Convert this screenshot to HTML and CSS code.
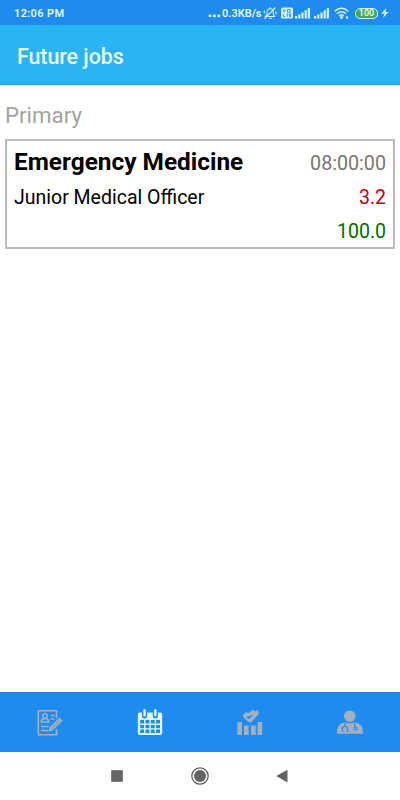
FILE: index.html
```
<!DOCTYPE html>
<html lang="en">
<head>
  <meta charset="UTF-8">
  <meta name="viewport" content="width=device-width, initial-scale=1.0">
  <title>Future jobs</title>
  <link rel="stylesheet" href="styles.css">
</head>
<body>
  <!-- Status bar -->
  <div class="status-bar">
    <span class="clock">12:06 PM</span>
    <div class="status-icons">
      <svg class="dots" width="14" height="14" viewBox="0 0 14 14">
        <circle cx="2" cy="9.8" r="1.5"/><circle cx="6.4" cy="9.8" r="1.5"/><circle cx="10.8" cy="9.8" r="1.5"/>
      </svg>
      <span class="speed">0.3KB/s</span>
      <svg class="bell" width="14" height="14" viewBox="0 0 14 14">
        <path class="line" d="M2.500 10.500h9L10.300 8.500V6c0-2-1.200-3.300-3.100-3.300S4 4 4 6v2.500zM5.800 12.300h3M7.200 1.200v1.500M1.500 12.800 12.500 1.500M1.300 4.500v3M13 5.500v3"/>
      </svg>
      <svg class="volte" width="12" height="14" viewBox="0 0 12 14">
        <rect x="0" y="1.500" width="12" height="11" rx="1.500"/>
        <path class="cut" d="M2 3.500 3.300 6.200 4.600 3.500M6.500 3.500h2.800v2.700H6.500zM2.300 8v2.800h2M5.300 8h2M6.300 8v2.800M10.300 8H8.500v2.800h1.800M8.500 9.400h1.500"/>
      </svg>
      <svg class="signal" width="15" height="14" viewBox="0 0 15 14">
        <path d="M0 10h2.200v2.500H0zM3.200 8.500h2.200v4H3.200zM6.400 6.500h2.200v6H6.400zM9.600 4.300h2.200v8.200H9.600zM12.700 2h2.200v10.500h-2.200z"/>
      </svg>
      <svg class="signal" width="15" height="14" viewBox="0 0 15 14">
        <path d="M0 10h2.200v2.500H0zM3.200 8.500h2.200v4H3.200zM6.400 6.500h2.200v6H6.400zM9.600 4.300h2.200v8.200H9.600zM12.700 2h2.200v10.500h-2.200z"/>
      </svg>
      <svg class="wifi" width="16" height="14" viewBox="0 0 16 14">
        <path class="wave" d="M.8 5.300c4-4 9.400-4 13.400 0M3 7.700c2.700-2.700 6.300-2.700 9 0M5.200 9.900c1.500-1.400 3.100-1.400 4.600 0"/>
        <circle cx="7.500" cy="11.500" r="1.400"/><circle cx="13" cy="11.500" r="1.200"/>
      </svg>
      <span class="battery">100</span>
      <svg class="bolt" width="8" height="14" viewBox="0 0 8 14">
        <path d="M5.200 2 .3 7.700h3L2 12l5.600-5.900h-3z"/>
      </svg>
    </div>
  </div>

  <header class="app-bar">
    <h1>Future jobs</h1>
  </header>

  <main>
    <h2 class="section-title">Primary</h2>
    <div class="job">
      <div class="job-row">
        <span class="department">Emergency Medicine</span>
        <span class="time">08:00:00</span>
      </div>
      <div class="job-row">
        <span class="role">Junior Medical Officer</span>
        <span class="distance">3.2</span>
      </div>
      <div class="job-row">
        <span></span>
        <span class="rate">100.0</span>
      </div>
    </div>
  </main>

  <!-- Bottom tabs -->
  <nav class="tabs">
    <a class="tab">
      <svg width="28" height="28" viewBox="0 0 28 28">
        <path class="outline" d="M20.500 9V1.800H2.300v24h18.200V20"/>
        <circle class="outline" cx="9" cy="7" r="2.200"/>
        <path class="outline" d="M5.300 13c0-4.500 7.400-4.500 7.400 0zM14.500 6.500h4M14.500 10h4M5 17.500h8M5 21.500h7"/>
        <path class="pen" d="m13.500 21.500 1.200-3.300L23.500 9.500l2.200 2.200-9.200 8.800z"/>
      </svg>
    </a>
    <a class="tab active">
      <svg width="28" height="28" viewBox="0 0 28 28">
        <path fill-rule="evenodd" d="M3.500 3.500H6v3.300a2.600 2.600 0 0 0 5.200 0V3.500h5.600v3.300a2.600 2.600 0 0 0 5.200 0V3.500h2.500q1.700 0 1.700 1.700v19q0 1.700-1.700 1.700h-21q-1.700 0-1.700-1.700v-19q0-1.700 1.700-1.700z
          M4.200 11v3.600h3.900V11zM9.500 11v3.600h3.900V11zM14.800 11v3.600h3.900V11zM20.100 11v3.600H24V11z
          M4.200 15.900v3.400h3.900v-3.400zM9.500 15.900v3.400h3.900v-3.400zM14.800 15.900v3.400h3.900v-3.400zM20.100 15.900v3.400H24v-3.400z
          M4.200 20.600V24h3.900v-3.400zM9.500 20.600V24h3.900v-3.400zM14.800 20.600V24h3.900v-3.400zM20.100 20.600V24H24v-3.400z"/>
        <rect x="7.400" y="0" width="2.400" height="7.500" rx="1.200"/>
        <rect x="18.200" y="0" width="2.400" height="7.500" rx="1.200"/>
      </svg>
    </a>
    <a class="tab">
      <svg width="28" height="28" viewBox="0 0 28 28">
        <path d="M1.300 13h4.700v13H1.300zM8 16.500h4.700V26H8zM15 16.500h4.700V26H15zM21.500 13h4.700v13h-4.700z"/>
        <path fill-rule="evenodd" d="m6.500 6.800 3.300-3.500 3 .7L16.500.8l3 1.400L22 1l.8 3.800-2 2.500-6.500 6.900-5.300-4.200zM10.500 8.500l2.700 1.500 3.800-3.800-1.800-.3-2 1.700-1.200-.7z"/>
      </svg>
    </a>
    <a class="tab">
      <svg width="28" height="28" viewBox="0 0 28 28">
        <circle cx="13.800" cy="7.200" r="5.800"/>
        <path d="M1 24.800c0-6 1.300-10.600 8.500-11.500 2.500 1.500 6.300 1.500 8.800 0 7.200.9 8.700 5.500 8.700 11.500z"/>
        <path class="scope" d="M9 13.300v3.700M6.300 22.500v-2.300c0-4 5.400-4 5.400 0v2.300H10.500M6.300 22.500h1.200M18.800 13.300V18"/>
        <circle class="scope" cx="19.500" cy="19.600" r="1.600"/>
      </svg>
    </a>
  </nav>

  <!-- System navigation -->
  <div class="system-nav">
    <svg width="28" height="28" viewBox="0 0 28 28"><rect x="8.200" y="8.200" width="11.600" height="11.600"/></svg>
    <svg width="28" height="28" viewBox="0 0 28 28"><circle class="ring" cx="14" cy="14" r="8.200"/><circle cx="14" cy="14" r="6"/></svg>
    <svg width="28" height="28" viewBox="0 0 28 28"><path d="M18.500 7.800v12.700L7.200 14.100z"/></svg>
  </div>
</body>
</html>
```
FILE: styles.css
```
/* General Styles */
body {
  font-family: Roboto, sans-serif;
  margin: 0;
  height: 100vh;
  background: #fff;
  display: flex;
  flex-direction: column;
  overflow: hidden;
}

h1,
h2 {
  margin: 0;
}

svg {
  display: block;
  flex: none;
}

/* Status Bar */
.status-bar {
  height: 25px;
  box-sizing: border-box;
  padding: 1px 11px 0 14px;
  background: #1f8bef;
  color: #e2fbff;
  fill: #d5f5fc;
  display: flex;
  align-items: center;
  justify-content: space-between;
  font-size: 11px;
  font-weight: 600;
}

.clock {
  letter-spacing: 0.35px;
}

.status-icons {
  display: flex;
  align-items: center;
}

.speed {
  width: 41px;
  white-space: nowrap;
}

.line,
.wave {
  fill: none;
  stroke: #d5f5fc;
  stroke-width: 1.1;
}

.wave {
  stroke-width: 1.5;
}

.cut {
  fill: none;
  stroke: #1f8bef;
  stroke-width: 0.9;
}

.volte {
  margin-left: 4px;
}

.signal {
  margin-left: 4px;
}

.volte + .signal {
  margin-left: 2px;
}

.wifi {
  margin-left: 5px;
}

.battery {
  box-sizing: border-box;
  width: 23px;
  height: 11px;
  margin: 0 3px 0 5px;
  border: 1px solid #d5f5e8;
  border-radius: 5px;
  background: #43a85b;
  font-size: 9px;
  line-height: 9px;
  text-align: center;
}

/* App Bar */
.app-bar {
  height: 60px;
  box-sizing: border-box;
  padding: 3px 17px 0;
  background: #29b4f6;
  border-bottom: 1px solid #229bd0;
  color: #effdff;
  display: flex;
  align-items: center;
}

.app-bar h1 {
  font-size: 21.3px;
  font-weight: 500;
}

/* Job List */
main {
  flex: 1;
  padding: 15px 5px 0;
}

.section-title {
  height: 39px;
  line-height: 31px;
  font-size: 22.3px;
  font-weight: 400;
  color: #a2a2a2;
}

.job {
  height: 110px;
  box-sizing: border-box;
  border: 2px solid #bdbdbd;
  padding: 5px 7px 0;
}

.job-row {
  height: 34px;
  line-height: 35px;
  display: flex;
  justify-content: space-between;
  font-size: 19.5px;
}

.department {
  font-size: 24.4px;
  font-weight: 700;
  line-height: 32px;
}

.time {
  font-size: 19.7px;
  color: #777;
}

.distance {
  color: #c60000;
}

.rate {
  color: #006b00;
}

/* Bottom Tabs */
.tabs {
  height: 60px;
  background: #1f8bef;
  border-top: 1px solid #1c7fdc;
  box-sizing: border-box;
  display: flex;
}

.tab {
  flex: 1;
  display: flex;
  align-items: center;
  justify-content: center;
  fill: #a3b0bd;
}

.tab.active {
  fill: #dcfaff;
}

.outline {
  fill: none;
  stroke: #a3b0bd;
  stroke-width: 1.6;
}

.pen {
  fill: #7fa5cb;
  stroke: #a3b0bd;
  stroke-width: 1.5;
}

.scope {
  fill: none;
  stroke: #1f8bef;
  stroke-width: 1.1;
}

/* System Navigation */
.system-nav {
  height: 48px;
  padding: 0 103px 0 102.5px;
  display: flex;
  align-items: center;
  justify-content: space-between;
  fill: #646464;
}

.ring {
  fill: none;
  stroke: #555;
  stroke-width: 1.2;
}
```
